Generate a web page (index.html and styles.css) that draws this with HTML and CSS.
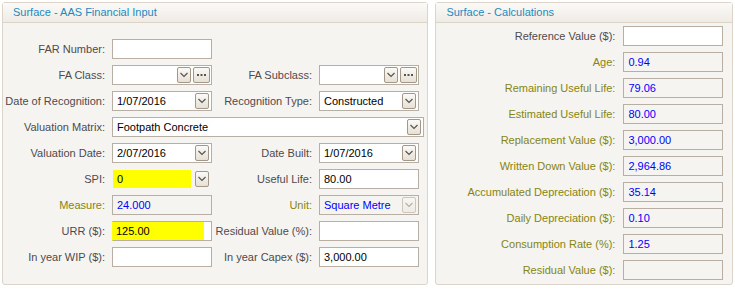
FILE: index.html
```html
<!DOCTYPE html>
<html>
<head>
    <title>Surface</title>
    <link rel="stylesheet" href="styles.css">
</head>
<body>
    <div class="page">
        <div class="panel left">
            <div class="panel-head">Surface - AAS Financial Input</div>
            <div class="form form-left">
                <label>FAR Number:</label>
                <div class="field"><span class="val"></span></div>
                <span></span><span></span>

                <label>FA Class:</label>
                <div class="field"><span class="val"></span><span class="dd"></span><span class="more"></span></div>
                <label>FA Subclass:</label>
                <div class="field"><span class="val"></span><span class="dd"></span><span class="more"></span></div>

                <label>Date of Recognition:</label>
                <div class="field"><span class="val">1/07/2016</span><span class="dd"></span></div>
                <label>Recognition Type:</label>
                <div class="field"><span class="val">Constructed</span><span class="dd"></span></div>

                <label>Valuation Matrix:</label>
                <div class="field wide"><span class="val">Footpath Concrete</span><span class="dd"></span></div>

                <label>Valuation Date:</label>
                <div class="field"><span class="val">2/07/2016</span><span class="dd"></span></div>
                <label>Date Built:</label>
                <div class="field"><span class="val">1/07/2016</span><span class="dd"></span></div>

                <label>SPI:</label>
                <div class="field bare"><span class="val marked">0</span><span class="dd"></span></div>
                <label>Useful Life:</label>
                <div class="field"><span class="val">80.00</span></div>

                <label class="calc">Measure:</label>
                <div class="field ro"><span class="val">24.000</span></div>
                <label class="calc">Unit:</label>
                <div class="field ro"><span class="val">Square Metre</span><span class="dd off"></span></div>

                <label>URR ($):</label>
                <div class="field urr"><span class="val">125.00</span></div>
                <label>Residual Value (%):</label>
                <div class="field"><span class="val"></span></div>

                <label>In year WIP ($):</label>
                <div class="field"><span class="val"></span></div>
                <label>In year Capex ($):</label>
                <div class="field"><span class="val">3,000.00</span></div>
            </div>
        </div>

        <div class="panel right">
            <div class="panel-head">Surface - Calculations</div>
            <div class="form form-right">
                <label>Reference Value ($):</label>
                <div class="field"><span class="val"></span></div>
                <label class="calc">Age:</label>
                <div class="field ro"><span class="val">0.94</span></div>
                <label class="calc">Remaining Useful Life:</label>
                <div class="field ro"><span class="val">79.06</span></div>
                <label class="calc">Estimated Useful Life:</label>
                <div class="field ro"><span class="val">80.00</span></div>
                <label class="calc">Replacement Value ($):</label>
                <div class="field ro"><span class="val">3,000.00</span></div>
                <label class="calc">Written Down Value ($):</label>
                <div class="field ro"><span class="val">2,964.86</span></div>
                <label class="calc">Accumulated Depreciation ($):</label>
                <div class="field ro"><span class="val">35.14</span></div>
                <label class="calc">Daily Depreciation ($):</label>
                <div class="field ro"><span class="val">0.10</span></div>
                <label class="calc">Consumption Rate (%):</label>
                <div class="field ro"><span class="val">1.25</span></div>
                <label class="calc">Residual Value ($):</label>
                <div class="field ro"><span class="val"></span></div>
            </div>
        </div>
    </div>
</body>
</html>
```

FILE: styles.css
```css
body {
    margin: 0;
    background-color: #ffffff;
    font-family: "Liberation Sans", Arial, sans-serif;
    font-size: 11px;
}
.page {
    display: flex;
    gap: 7px;
    padding: 2px;
}
.panel {
    box-sizing: border-box;
    height: 283px;
    background-color: #f6f4f0;
    border: 1px solid #dcd4c8;
    border-radius: 3px;
}
.panel.left {
    width: 427px;
}
.panel.right {
    width: 298px;
}
.panel-head {
    height: 19px;
    line-height: 19px;
    padding-left: 10px;
    color: #1b8ac2;
    font-size: 11px;
    background: linear-gradient(#fbfaf8, #efebe4);
    border-bottom: 1px solid #dcd4c8;
}
.form {
    display: grid;
    grid-auto-rows: 20px;
    row-gap: 6px;
    align-items: center;
}
.form-left {
    padding-top: 16px;
    grid-template-columns: 109px 100px 107px 100px;
}
.form-right {
    padding-top: 3px;
    grid-template-columns: 187px 100px;
}
.form label {
    text-align: right;
    padding-right: 7px;
    color: #4e4a4e;
    white-space: nowrap;
}
.form-right label {
    padding-right: 8px;
}
.form label.calc {
    color: #85850f;
}
.field {
    box-sizing: border-box;
    height: 20px;
    display: flex;
    align-items: center;
    background-color: #ffffff;
    border: 1px solid #b8afa4;
    padding: 0 1px 0 4px;
    color: #000000;
}
.field.wide {
    width: 312px;
    grid-column: 2 / span 3;
}
.field.ro {
    background-color: #f6f4f0;
    color: #0000ff;
}
.field.bare {
    border-color: transparent;
    background-color: transparent;
    padding-left: 0;
}
.field.urr {
    background: linear-gradient(to right, #ffff00 91px, #ffffff 91px);
    border-left-color: #ffff00;
    padding-left: 3px;
}
.val {
    flex: 1;
    white-space: nowrap;
    overflow: hidden;
    line-height: 16px;
}
.val.marked {
    flex: 0 0 74px;
    height: 18px;
    line-height: 18px;
    padding-left: 4px;
    background-color: #ffff00;
    margin-right: auto;
}
.dd {
    box-sizing: border-box;
    width: 14px;
    height: 16px;
    margin-right: 1px;
    border: 1px solid #a3978a;
    border-radius: 2px;
    background-image: url("data:image/svg+xml,%3Csvg xmlns='http://www.w3.org/2000/svg' width='12' height='14'%3E%3Cpolyline points='2.5,5 6,8.5 9.5,5' fill='none' stroke='%23555' stroke-width='1.2'/%3E%3C/svg%3E"), linear-gradient(#fbfaf6, #e7e0d4);
    background-repeat: no-repeat;
}
.dd.off {
    border-color: #cdc6bb;
    background-image: url("data:image/svg+xml,%3Csvg xmlns='http://www.w3.org/2000/svg' width='12' height='14'%3E%3Cpolyline points='2.5,5 6,8.5 9.5,5' fill='none' stroke='%23b5b0a8' stroke-width='1.2'/%3E%3C/svg%3E"), linear-gradient(#f8f6f2, #eeebe5);
}
.field:has(.more) .dd {
    margin-right: 0;
}
.more {
    box-sizing: border-box;
    width: 17px;
    height: 16px;
    margin-left: 2px;
    border: 1px solid #a3978a;
    border-radius: 2px;
    background-image: url("data:image/svg+xml,%3Csvg xmlns='http://www.w3.org/2000/svg' width='15' height='14'%3E%3Crect x='3' y='6' width='2' height='2' fill='%23555'/%3E%3Crect x='6.5' y='6' width='2' height='2' fill='%23555'/%3E%3Crect x='10' y='6' width='2' height='2' fill='%23555'/%3E%3C/svg%3E"), linear-gradient(#fbfaf6, #e7e0d4);
    background-repeat: no-repeat;
}
```
